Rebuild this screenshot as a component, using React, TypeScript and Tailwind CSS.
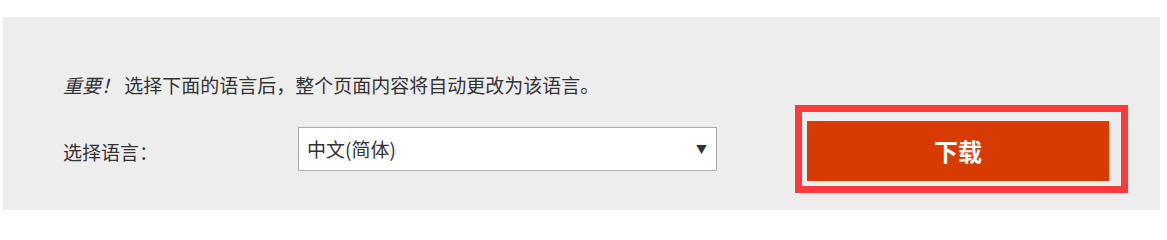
export default function App() {
  return (
    <div
      className="h-[210px] w-[1167px] overflow-hidden bg-white pt-[17px]"
      style={{ fontFamily: '"Noto Sans CJK SC", "Noto Sans", sans-serif' }}
    >
      <div className="ml-[3px] mr-[7px] h-[193px] bg-[#ededed] pl-[60px] pt-[54px] text-[#333]">
        <p className="text-[19px] leading-[28px]">
          <em className="italic">重要！</em> 选择下面的语言后，整个页面内容将自动更改为该语言。
        </p>

        <div className="mt-[22px] flex items-start">
          <label className="mt-[17px] w-[235px] text-[19px] leading-[28px]">选择语言：</label>

          <div className="mt-[6px] flex h-[44px] w-[419px] items-center justify-between border border-[#aaa] bg-white pl-[8px] pr-[9px]">
            <span className="text-[19px] leading-[28px] text-[#333]">中文(简体)</span>
            <span className="text-[11px] leading-none text-[#333]">▼</span>
          </div>

          <div className="relative ml-[90px]">
            <button
              type="button"
              className="flex h-[60px] w-[302px] items-center justify-center bg-[#d83b01] text-[24px] font-bold text-white"
            >
              下载
            </button>
            <div className="pointer-events-none absolute -bottom-[12px] -left-[12px] -right-[19px] -top-[16px] border-[7px] border-[#fd3a3a]" />
          </div>
        </div>
      </div>
    </div>
  );
}
